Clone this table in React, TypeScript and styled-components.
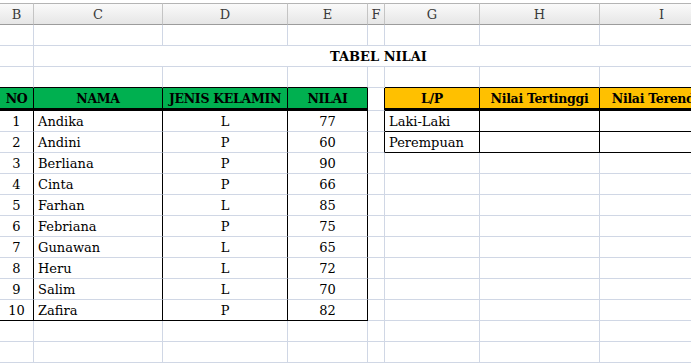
import React from 'react';
import styled, { createGlobalStyle } from 'styled-components';

const GRID = '#d0d7e5';
const BLACK = '#000000';

// column widths, the last one runs off the window
const columns = [
  { key: 'B', width: 34 },
  { key: 'C', width: 129 },
  { key: 'D', width: 125 },
  { key: 'E', width: 80 },
  { key: 'F', width: 17 },
  { key: 'G', width: 95 },
  { key: 'H', width: 120 },
  { key: 'I', width: 124 },
];

interface Student {
  no: number;
  name: string;
  gender: 'L' | 'P';
  score: number;
}

const students: Student[] = [
  { no: 1, name: 'Andika', gender: 'L', score: 77 },
  { no: 2, name: 'Andini', gender: 'P', score: 60 },
  { no: 3, name: 'Berliana', gender: 'P', score: 90 },
  { no: 4, name: 'Cinta', gender: 'P', score: 66 },
  { no: 5, name: 'Farhan', gender: 'L', score: 85 },
  { no: 6, name: 'Febriana', gender: 'P', score: 75 },
  { no: 7, name: 'Gunawan', gender: 'L', score: 65 },
  { no: 8, name: 'Heru', gender: 'L', score: 72 },
  { no: 9, name: 'Salim', gender: 'L', score: 70 },
  { no: 10, name: 'Zafira', gender: 'P', score: 82 },
];

const summary = ['Laki-Laki', 'Perempuan'];

const GlobalStyle = createGlobalStyle`
  html, body {
    margin: 0;
    padding: 0;
    background: #ffffff;
  }
  body {
    font-family: "DejaVu Serif", "Liberation Serif", serif;
  }
`;

const Window = styled.div`
  width: 691px;
  height: 363px;
  overflow: hidden;
  background: #ffffff;
  padding-top: 3px;
  box-sizing: border-box;
`;

const Sheet = styled.div`
  display: grid;
  grid-template-columns: ${columns.map((c) => `${c.width}px`).join(' ')};
  width: max-content;
`;

const ColHeader = styled.div`
  height: 22px;
  box-sizing: border-box;
  display: flex;
  align-items: center;
  justify-content: center;
  background: linear-gradient(#fafafa, #e6e6e6);
  border-top: 1px solid #b4b4b4;
  border-bottom: 1px solid #9c9c9c;
  border-right: 1px solid #c4c4c4;
  color: #3a3a3a;
  font-size: 13px;
`;

type Align = 'left' | 'center';

const Cell = styled.div<{
  $right?: string;
  $bottom?: string;
  $bottomWidth?: number;
  $bg?: string;
  $align?: Align;
  $bold?: boolean;
  $span?: number;
  $height?: number;
}>`
  height: ${(p) => p.$height || 21}px;
  box-sizing: border-box;
  display: flex;
  align-items: flex-end;
  justify-content: ${(p) => (p.$align === 'left' ? 'flex-start' : 'center')};
  padding: 0 ${(p) => (p.$align === 'left' ? '4px' : '0')} 0;
  grid-column: span ${(p) => p.$span || 1};
  background: ${(p) => p.$bg || '#ffffff'};
  border-right: 1px solid ${(p) => p.$right || GRID};
  border-bottom: ${(p) => p.$bottomWidth || 1}px solid ${(p) => p.$bottom || GRID};
  color: #000000;
  font-size: 13px;
  font-weight: ${(p) => (p.$bold ? 700 : 400)};
  white-space: nowrap;
  overflow: hidden;
  line-height: 19px;
`;

const HeadCell = styled(Cell).attrs({ $bottom: BLACK, $right: BLACK, $bottomWidth: 3, $height: 23, $bold: true })`
  font-size: 12.5px;
  letter-spacing: -0.3px;
`;

const App: React.FC = () => {
  const blank = (bottoms: (string | undefined)[] = []) =>
    columns.map((c, i) => <Cell key={c.key} $bottom={bottoms[i]} />);

  return (
    <>
      <GlobalStyle />
      <Window>
        <Sheet>
          {columns.map((c) => (
            <ColHeader key={c.key}>{c.key}</ColHeader>
          ))}

          {blank()}

          <Cell />
          <Cell $span={7} $right="#ffffff" $bold>
            TABEL NILAI
          </Cell>

          {blank([BLACK, BLACK, BLACK, BLACK, undefined, BLACK, BLACK, BLACK])}

          {/* header row of both tables */}
          <HeadCell $bg="#00b050">NO</HeadCell>
          <HeadCell $bg="#00b050">NAMA</HeadCell>
          <HeadCell $bg="#00b050">JENIS KELAMIN</HeadCell>
          <HeadCell $bg="#00b050">NILAI</HeadCell>
          <Cell $right={BLACK} $height={23} />
          <HeadCell $bg="#ffc000">L/P</HeadCell>
          <HeadCell $bg="#ffc000">Nilai Tertinggi</HeadCell>
          <HeadCell $bg="#ffc000">Nilai Terendah</HeadCell>

          {students.map((s, i) => {
            const last = i === students.length - 1;
            const bottom = last ? BLACK : undefined;
            const label = summary[i];
            const edge = label ? BLACK : undefined;
            return (
              <React.Fragment key={s.no}>
                <Cell $right={BLACK} $bottom={bottom}>{s.no}</Cell>
                <Cell $right={BLACK} $bottom={bottom} $align="left">{s.name}</Cell>
                <Cell $right={BLACK} $bottom={bottom}>{s.gender}</Cell>
                <Cell $right={BLACK} $bottom={bottom}>{s.score}</Cell>
                <Cell $right={edge} />
                <Cell $right={edge} $bottom={edge} $align="left">
                  {label}
                </Cell>
                <Cell $right={edge} $bottom={edge} />
                <Cell $right={edge} $bottom={edge} />
              </React.Fragment>
            );
          })}

          {blank()}
          {blank()}
        </Sheet>
      </Window>
    </>
  );
};

export default App;
